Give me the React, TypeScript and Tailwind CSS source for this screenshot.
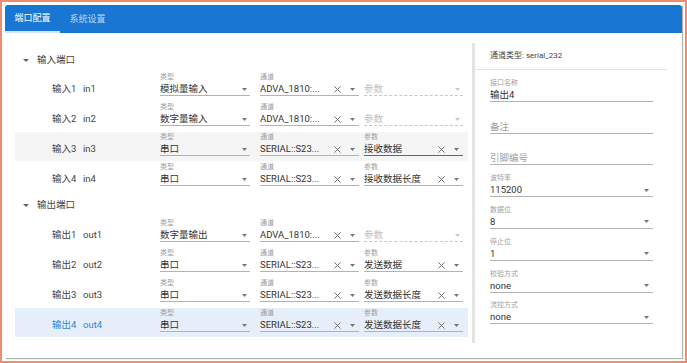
import React from "react";

const Arrow = ({ c = "#757575" }: { c?: string }) => (
  <svg width="5" height="3" viewBox="0 0 5 3" className="shrink-0">
    <path d="M0 0h5L2.5 3z" fill={c} />
  </svg>
);

const Clear = () => (
  <svg width="7" height="7" viewBox="0 0 7 7" className="shrink-0">
    <path d="M0.4 0.4L6.6 6.6M6.6 0.4L0.4 6.6" stroke="#666" strokeWidth="0.9" />
  </svg>
);

type SelProps = {
  label?: string;
  value: string;
  w: string;
  clear?: boolean;
  disabled?: boolean;
  dark?: boolean;
};

const Sel = ({ label, value, w, clear, disabled, dark }: SelProps) => (
  <div className={`flex flex-col pt-[1px] ${w}`}>
    <div className="h-[8px] leading-[8px] text-[7px] text-[#a0a0a0]">{disabled ? "" : label}</div>
    <div
      className={`mt-[2px] h-[13px] flex items-center border-b ${
        disabled ? "border-dashed border-[#c8c8c8]" : dark ? "border-[#666]" : "border-[#b3b3b3]"
      } ${clear ? "pr-[4.5px]" : "pr-[3.5px]"}`}
    >
      <span className={`flex-1 text-[9.5px] leading-[12px] whitespace-nowrap ${disabled ? "text-[#c0c0c0]" : "text-[#333]"}`}>
        {value}
      </span>
      {clear && <Clear />}
      <span className={clear ? "ml-[8.5px] flex" : "flex"}>
        <Arrow c={disabled ? "#c8c8c8" : "#777"} />
      </span>
    </div>
  </div>
);

type Row = {
  name: string;
  id: string;
  type: string;
  ch: string;
  param?: string;
  bg?: string;
  active?: boolean;
  dark?: boolean;
};

const RowView = ({ r }: { r: Row }) => (
  <div className={`flex h-[29px] pl-[37px] pr-[5px] ${r.bg ?? ""}`}>
    <div className={`w-[31px] pt-[11px] text-[9.5px] leading-[12px] ${r.active ? "text-[#2f86d8]" : "text-[#444]"}`}>{r.name}</div>
    <div className={`w-[77px] pt-[11px] text-[9.5px] leading-[12px] ${r.active ? "text-[#2f86d8]" : "text-[#444]"}`}>{r.id}</div>
    <Sel label="类型" value={r.type} w="w-[90px]" />
    <div className="w-[10px]" />
    <Sel label="通道" value={r.ch} w="w-[99px]" clear />
    <div className="w-[5px]" />
    {r.param ? (
      <Sel label="参数" value={r.param} w="w-[99px]" clear dark={r.dark} />
    ) : (
      <Sel value="参数" w="w-[99px]" disabled />
    )}
  </div>
);

const Header = ({ text, cls }: { text: string; cls: string }) => (
  <div className={`flex items-center pl-[8px] ${cls}`}>
    <svg width="6" height="3" viewBox="0 0 6 3">
      <path d="M0 0h6L3 3z" fill="#666" />
    </svg>
    <span className="ml-[8px] text-[9.5px] text-[#444]">{text}</span>
  </div>
);

const Field = ({ label, value, placeholder, arrow }: { label?: string; value?: string; placeholder?: string; arrow?: boolean }) => (
  <div className="h-[31.8px] flex flex-col justify-end">
    {label && <div className="text-[7px] leading-[9px] text-[#a0a0a0] mb-[1px]">{label}</div>}
    <div className="h-[13px] flex items-center border-b border-[#b3b3b3] pr-[4.5px]">
      <span className={`flex-1 text-[9.5px] leading-[12px] ${placeholder ? "text-[#a0a0a0]" : "text-[#333]"}`}>
        {value ?? placeholder}
      </span>
      {arrow && <Arrow c="#777" />}
    </div>
  </div>
);

const inputs: Row[] = [
  { name: "输入1", id: "in1", type: "模拟量输入", ch: "ADVA_1810:..." },
  { name: "输入2", id: "in2", type: "数字量输入", ch: "ADVA_1810:..." },
  { name: "输入3", id: "in3", type: "串口", ch: "SERIAL::S23...", param: "接收数据", bg: "bg-[#f5f5f5]", dark: true },
  { name: "输入4", id: "in4", type: "串口", ch: "SERIAL::S23...", param: "接收数据长度" },
];

const outputs: Row[] = [
  { name: "输出1", id: "out1", type: "数字量输出", ch: "ADVA_1810:..." },
  { name: "输出2", id: "out2", type: "串口", ch: "SERIAL::S23...", param: "发送数据" },
  { name: "输出3", id: "out3", type: "串口", ch: "SERIAL::S23...", param: "发送数据长度" },
  { name: "输出4", id: "out4", type: "串口", ch: "SERIAL::S23...", param: "发送数据长度", bg: "bg-[#e5eef9]", active: true },
];

export default function App() {
  return (
    <div className="w-[687px] h-[363px] bg-white border-2 border-[#f28a6d] p-[3px] [font-family:Roboto,'Noto_Sans_CJK_SC',sans-serif] overflow-hidden">
      <div className="w-full h-full flex flex-col bg-white shadow-[1px_1px_1px_rgba(0,0,0,0.3)]">
        <div className="h-[28px] bg-[#1976d2] rounded-t-[3px] flex shrink-0">
          <div className="w-[55px] flex flex-col">
            <div className="flex-1 flex items-center justify-center pt-[2px] text-[9px] text-white">端口配置</div>
            <div className="h-[2px] bg-[#d7e6f7]" />
          </div>
          <div className="w-[55px] flex items-center justify-center pt-[2px] text-[9px] text-white/70">系统设置</div>
        </div>
        <div className="flex flex-1">
          <div className="w-[467px] pl-[10px] pr-[4px] pt-[15px]">
            <Header text="输入端口" cls="h-[24px]" />
            <div className="flex flex-col gap-[1px]">
              {inputs.map((r) => (
                <RowView key={r.id} r={r} />
              ))}
            </div>
            <Header text="输出端口" cls="h-[25px] mt-[2px]" />
            <div className="flex flex-col gap-[1px]">
              {outputs.map((r) => (
                <RowView key={r.id} r={r} />
              ))}
            </div>
          </div>
          <div className="flex-1 mt-[10px] mb-[15px] mr-[15px] border-l-[3px] border-[#e3e3e3] flex flex-col">
            <div className="h-[27px] border-b border-[#e3e3e3] flex items-center pl-[15px] text-[8px] text-[#444]">
              通道类型: serial_232
            </div>
            <div className="pl-[15px] w-[178px] flex flex-col">
              <Field label="接口名称" value="输出4" />
              <Field placeholder="备注" />
              <Field placeholder="引脚编号" />
              <Field label="波特率" value="115200" arrow />
              <Field label="数据位" value="8" arrow />
              <Field label="停止位" value="1" arrow />
              <Field label="校验方式" value="none" arrow />
              <Field label="流控方式" value="none" arrow />
            </div>
          </div>
        </div>
      </div>
    </div>
  );
}
